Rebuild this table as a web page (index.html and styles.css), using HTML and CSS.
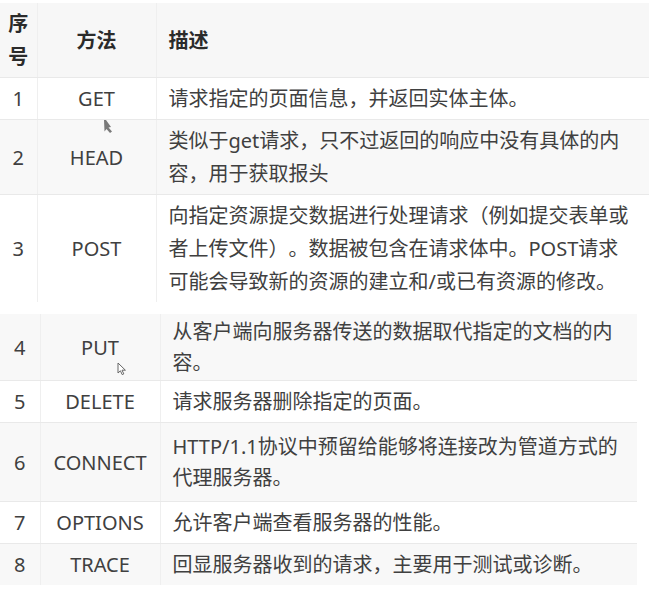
FILE: index.html
```html
<!DOCTYPE html>
<html lang="zh-CN">
<head>
    <meta charset="UTF-8">
    <title>HTTP 请求方法</title>
    <link rel="stylesheet" href="styles.css">
</head>
<body>
    <div class="screen">
        <table class="methods top">
            <colgroup>
                <col class="c-no">
                <col class="c-name">
                <col>
            </colgroup>
            <thead>
                <tr>
                    <th class="no">序号</th>
                    <th class="name">方法</th>
                    <th class="desc">描述</th>
                </tr>
            </thead>
            <tbody>
                <tr>
                    <td class="no">1</td>
                    <td class="name">GET</td>
                    <td class="desc">请求指定的页面信息，并返回实体主体。</td>
                </tr>
                <tr class="alt">
                    <td class="no">2</td>
                    <td class="name">HEAD</td>
                    <td class="desc">类似于get请求，只不过返回的响应中没有具体的内容，用于获取报头</td>
                </tr>
                <tr class="last">
                    <td class="no">3</td>
                    <td class="name">POST</td>
                    <td class="desc">向指定资源提交数据进行处理请求（例如提交表单或<br>者上传文件）。数据被包含在请求体中。POST请求<br>可能会导致新的资源的建立和/或已有资源的修改。</td>
                </tr>
            </tbody>
        </table>

        <table class="methods bottom">
            <colgroup>
                <col class="c-no">
                <col class="c-name">
                <col>
            </colgroup>
            <tbody>
                <tr class="alt short">
                    <td class="no">4</td>
                    <td class="name">PUT</td>
                    <td class="desc">从客户端向服务器传送的数据取代指定的文档的内容。</td>
                </tr>
                <tr>
                    <td class="no">5</td>
                    <td class="name">DELETE</td>
                    <td class="desc">请求服务器删除指定的页面。</td>
                </tr>
                <tr class="alt tall">
                    <td class="no">6</td>
                    <td class="name">CONNECT</td>
                    <td class="desc">HTTP/1.1协议中预留给能够将连接改为管道方式的代理服务器。</td>
                </tr>
                <tr>
                    <td class="no">7</td>
                    <td class="name">OPTIONS</td>
                    <td class="desc">允许客户端查看服务器的性能。</td>
                </tr>
                <tr class="alt last">
                    <td class="no">8</td>
                    <td class="name">TRACE</td>
                    <td class="desc">回显服务器收到的请求，主要用于测试或诊断。</td>
                </tr>
            </tbody>
        </table>

        <!-- mouse pointers caught in the capture -->
        <svg class="pointer blur" width="12" height="15" viewBox="0 0 12 15">
            <path d="M2 1 L4 1 L9 8 L6.5 8.5 L10 12.5 L8 14 L4.5 10 L2.5 12.5 Z" fill="#7a7a7a"/>
        </svg>
        <svg class="pointer arrow" width="10" height="14" viewBox="0 0 10 14">
            <path d="M1 1 L1 11 L3.4 8.8 L5.2 12.6 L6.8 11.9 L5 8.2 L8.4 8.2 Z" fill="#fff" stroke="#666" stroke-width="1" stroke-linejoin="round"/>
        </svg>
    </div>
</body>
</html>
```

FILE: styles.css
```css
* {
    margin: 0;
    padding: 0;
    box-sizing: border-box;
}

body {
    font-family: 'Noto Sans', 'Noto Sans CJK SC', sans-serif;
    background: #ffffff;
    color: #404040;
}

.screen {
    position: relative;
    width: 659px;
    height: 592px;
    padding-top: 3px;
}

.methods {
    border-collapse: collapse;
    table-layout: fixed;
    font-size: 20px;
    text-spacing-trim: space-all;
}

.methods th,
.methods td {
    padding: 4px 8px 4px 12px;
    line-height: 33px;
    vertical-align: middle;
    border-bottom: 1px solid #e9e9e9;
    border-right: 1px solid #efefef;
}

.methods th:last-child,
.methods td:last-child {
    border-right: none;
}

.methods tr.last td {
    border-bottom: none;
}

.methods th {
    background: #f7f7f7;
    color: #2b2b2b;
    font-weight: 700;
}

.methods .no {
    padding-left: 4px;
    padding-right: 4px;
    text-align: center;
}

.methods .name {
    padding-left: 4px;
    padding-right: 4px;
    text-align: center;
}

.methods .desc {
    text-align: left;
}

.methods tr.alt td {
    background: #f8f8f8;
}

/* upper half of the capture */
.top {
    width: 649px;
}

.top .c-no {
    width: 37px;
}

.top .c-name {
    width: 119px;
}

.top td.desc {
    padding-right: 4px;
}

/* lower half sits a little off, as in the capture */
.bottom {
    width: 637px;
    margin-top: 12px;
}

.bottom .c-no {
    width: 40px;
}

.bottom .c-name {
    width: 120px;
}

.bottom td {
    line-height: 31px;
    padding-top: 5px;
    padding-bottom: 5px;
}

.bottom td.desc {
    padding-right: 6px;
}

.bottom tr.short td {
    padding-top: 2px;
    padding-bottom: 2px;
}

.bottom tr.tall td {
    padding-top: 8px;
    padding-bottom: 8px;
}

.pointer {
    position: absolute;
}

.pointer.blur {
    left: 102px;
    top: 119px;
    filter: blur(0.7px);
}

.pointer.arrow {
    left: 117px;
    top: 362px;
}
```
